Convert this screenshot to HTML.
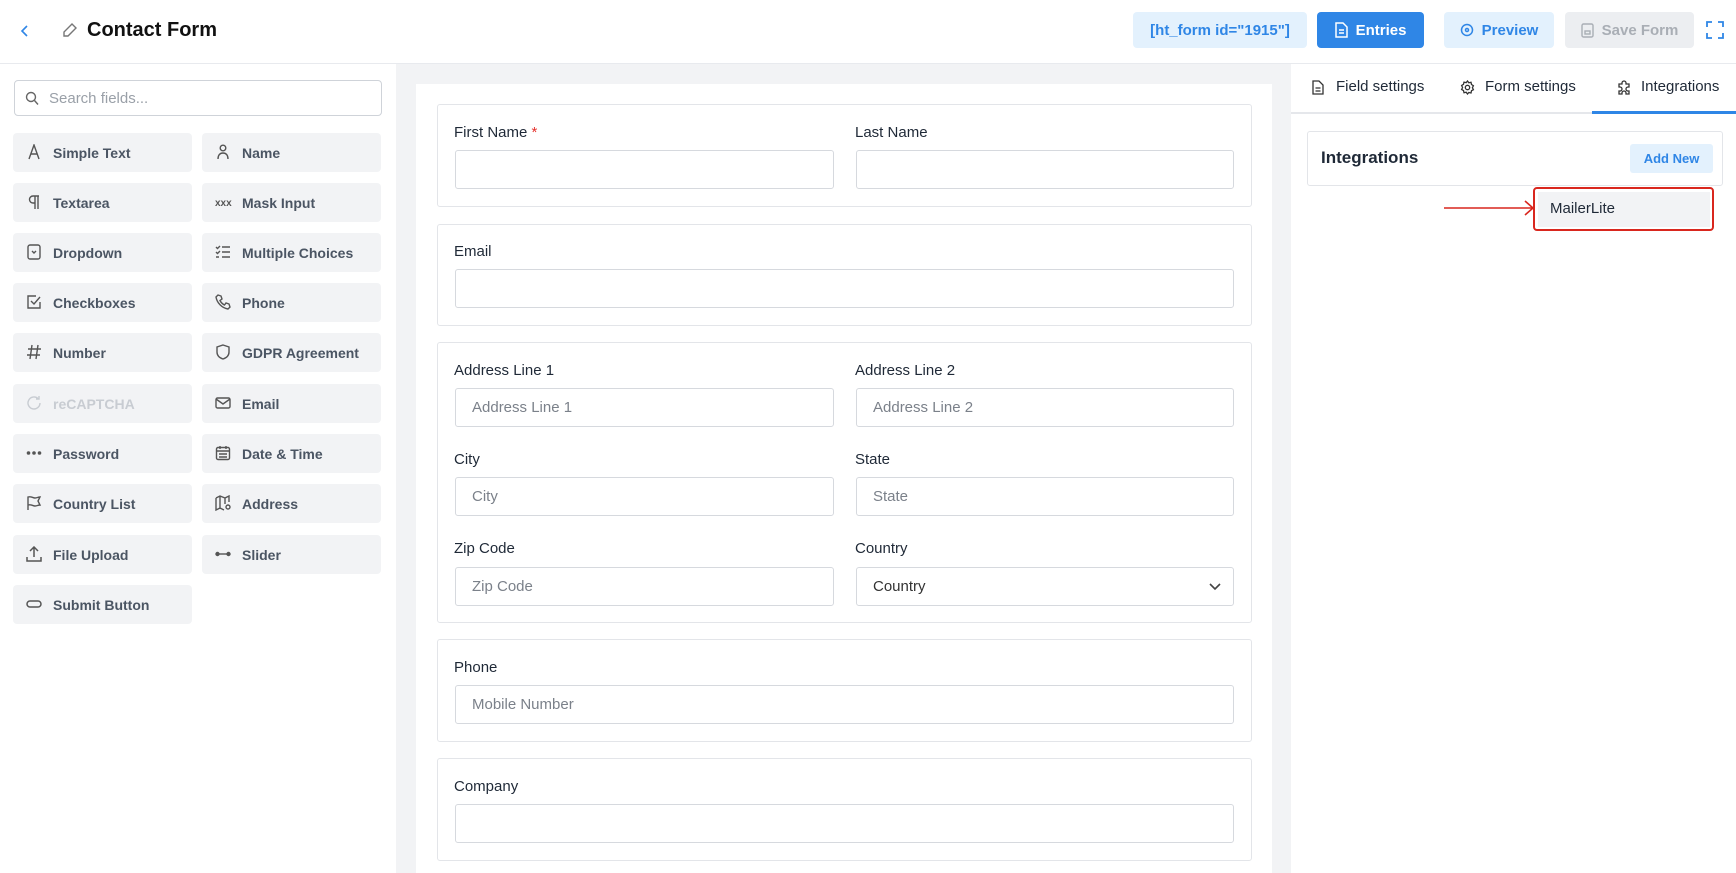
<!DOCTYPE html>
<html><head><meta charset="utf-8"><style>
*{box-sizing:border-box;margin:0;padding:0}
body{width:1736px;height:873px;overflow:hidden;background:#fff;font-family:"Liberation Sans",sans-serif;color:#1f2937;position:relative}
.abs{position:absolute}
.hdr{left:0;top:0;width:1736px;height:64px;border-bottom:1px solid #e8eaee;background:#fff}
.btn{position:absolute;top:12px;height:36px;border-radius:4px;font-size:15px;font-weight:bold;display:flex;align-items:center;justify-content:center;gap:8px}
.left{left:0;top:64px;width:396px;height:809px;background:#fff}
.fb{position:absolute;width:179px;height:39px;background:#f2f3f5;border-radius:4px;font-size:14px;font-weight:bold;color:#4b5563;display:flex;align-items:center}
.fb svg{position:absolute;left:13px;top:11px}
.fb span{position:absolute;left:40px}
.center{left:396px;top:64px;width:895px;height:809px;background:#f2f3f5}
.card{left:416px;top:84px;width:856px;height:789px;background:#fff}
.sec{position:absolute;left:437px;width:815px;border:1px solid #e3e5e9;border-radius:3px;background:#fff}
.lbl{position:absolute;font-size:15px;color:#1f2937}
.inp{position:absolute;height:39px;border:1px solid #d6d9de;border-radius:3px;background:#fff;font-size:15px;color:#7b818a;padding-left:16px;display:flex;align-items:center}
.right{left:1291px;top:64px;width:445px;height:809px;background:#fff}
.tab{position:absolute;top:78px;font-size:15px;color:#1f2937}
</style></head><body>
<div class="abs hdr">
 <svg class="abs" style="left:19px;top:24px" width="12" height="14" viewBox="0 0 12 14"><path d="M8 2 L3 7 L8 12" fill="none" stroke="#2f86e6" stroke-width="1.6"/></svg>
 <svg class="abs" style="left:61px;top:21px" width="18" height="18" viewBox="0 0 18 18" fill="none" stroke="#777" stroke-width="1.4"><path d="M11 3 L15 7 L7 15 L3 15 L3 11 Z"/></svg>
 <div class="abs" style="left:87px;top:19px;font-size:20px;font-weight:bold;color:#111">Contact Form</div>
 <div class="btn" style="left:1133px;width:174px;background:#e3f1fd;color:#2f86e6;font-weight:bold">[ht_form id="1915"]</div>
 <div class="btn" style="left:1317px;width:107px;background:#2f86e6;color:#fff"><svg width="13" height="16" viewBox="0 0 13 16" fill="none" stroke="#fff" stroke-width="1.5"><path d="M1 1h7l4 4v10H1z M4 8h5 M4 11h5"/></svg>Entries</div>
 <div class="btn" style="left:1444px;width:110px;background:#e3f1fd;color:#2f86e6"><svg width="14" height="14" viewBox="0 0 14 14" fill="none" stroke="#2f86e6" stroke-width="1.5"><circle cx="7" cy="7" r="5.5"/><circle cx="7" cy="7" r="1.5"/></svg>Preview</div>
 <div class="btn" style="left:1565px;width:129px;background:#eceef1;color:#a9aeb5"><svg width="13" height="15" viewBox="0 0 13 15" fill="none" stroke="#a9aeb5" stroke-width="1.4"><rect x="1" y="1" width="11" height="13" rx="1.5"/><rect x="4" y="8" width="5" height="3"/></svg>Save Form</div>
 <svg class="abs" style="left:1706px;top:21px" width="18" height="18" viewBox="0 0 18 18" fill="none" stroke="#2f86e6" stroke-width="1.8"><path d="M1 6V1h5 M12 1h5v5 M17 12v5h-5 M6 17H1v-5"/></svg>
</div>
<div class="abs left">
 <div class="abs" style="left:14px;top:16px;width:368px;height:36px;border:1px solid #cfd3d9;border-radius:4px"></div>
 <svg class="abs" style="left:25px;top:27px" width="14" height="15" viewBox="0 0 14 15" fill="none" stroke="#666" stroke-width="1.4"><circle cx="6" cy="6" r="4.5"/><path d="M9.5 9.5 L13 13.5"/></svg>
 <div class="abs" style="left:49px;top:26px;font-size:15px;color:#9aa0a8">Search fields...</div>
</div>
<div class="fb" style="left:13px;top:133px"><svg width="16" height="16" viewBox="0 0 16 16" fill="none" stroke="#555" stroke-width="1.4"><path d="M3 15 L8 1 L13 15 M5 10h6"/></svg><span>Simple Text</span></div>
<div class="fb" style="left:202px;top:133px"><svg width="16" height="16" viewBox="0 0 16 16" fill="none" stroke="#555" stroke-width="1.4"><circle cx="8" cy="4" r="2.8"/><path d="M3 15c0-4 2-6 5-6s5 2 5 6"/></svg><span>Name</span></div>
<div class="fb" style="left:13px;top:183px"><svg width="16" height="16" viewBox="0 0 16 16" fill="none" stroke="#555" stroke-width="1.4"><path d="M9 2v13 M12 2v13 M13 2H7a3.5 3.5 0 0 0 0 7h2"/></svg><span>Textarea</span></div>
<div class="fb" style="left:202px;top:183px"><svg width="18" height="16" viewBox="0 0 18 16"><text x="0" y="12" font-size="10" fill="#555" font-family="Liberation Sans">xxx</text></svg><span>Mask Input</span></div>
<div class="fb" style="left:13px;top:233px"><svg width="16" height="16" viewBox="0 0 16 16" fill="none" stroke="#555" stroke-width="1.4"><rect x="2" y="1" width="12" height="14" rx="2"/><path d="M6 7l2 2 2-2"/></svg><span>Dropdown</span></div>
<div class="fb" style="left:202px;top:233px"><svg width="16" height="16" viewBox="0 0 16 16" fill="none" stroke="#555" stroke-width="1.4"><path d="M7 3h8 M7 8h8 M7 13h8 M1 3l1.5 1.5L5 2 M1 8l1.5 1.5L5 7 M1 13h3"/></svg><span>Multiple Choices</span></div>
<div class="fb" style="left:13px;top:283px"><svg width="16" height="16" viewBox="0 0 16 16" fill="none" stroke="#555" stroke-width="1.4"><path d="M14 8v6H2V2h8 M5 7l3 3 6-7"/></svg><span>Checkboxes</span></div>
<div class="fb" style="left:202px;top:283px"><svg width="16" height="16" viewBox="0 0 16 16" fill="none" stroke="#555" stroke-width="1.4"><path d="M3 1l3 1 1 3-2 1.5c1 2 2.5 3.5 4.5 4.5L11 9l3 1 1 3-2 2C7 14 2 9 1 3z"/></svg><span>Phone</span></div>
<div class="fb" style="left:13px;top:333px"><svg width="16" height="16" viewBox="0 0 16 16" fill="none" stroke="#555" stroke-width="1.4"><path d="M6 1L4 15 M12 1l-2 14 M2 5h13 M1 11h13"/></svg><span>Number</span></div>
<div class="fb" style="left:202px;top:333px"><svg width="16" height="16" viewBox="0 0 16 16" fill="none" stroke="#555" stroke-width="1.4"><path d="M8 1l6 2v5c0 4-3 6-6 7-3-1-6-3-6-7V3z"/></svg><span>GDPR Agreement</span></div>
<div class="fb" style="left:13px;top:384px;color:#c8ccd2"><svg width="16" height="16" viewBox="0 0 16 16" fill="none" stroke="#c8ccd2" stroke-width="1.4"><path d="M14 8a6 6 0 1 1-2-4.5 M13 1v3h-3"/></svg><span>reCAPTCHA</span></div>
<div class="fb" style="left:202px;top:384px"><svg width="16" height="16" viewBox="0 0 16 16" fill="none" stroke="#555" stroke-width="1.4"><rect x="1" y="3" width="14" height="10" rx="1.5"/><path d="M1 4l7 5 7-5"/></svg><span>Email</span></div>
<div class="fb" style="left:13px;top:434px"><svg width="16" height="16" viewBox="0 0 16 16" fill="#555"><circle cx="2.5" cy="8" r="1.8"/><circle cx="8" cy="8" r="1.8"/><circle cx="13.5" cy="8" r="1.8"/></svg><span>Password</span></div>
<div class="fb" style="left:202px;top:434px"><svg width="16" height="16" viewBox="0 0 16 16" fill="none" stroke="#555" stroke-width="1.4"><rect x="1.5" y="2.5" width="13" height="12" rx="1.5"/><path d="M1.5 6h13 M5 1v3 M11 1v3 M4 9h8 M4 12h8"/></svg><span>Date &amp; Time</span></div>
<div class="fb" style="left:13px;top:484px"><svg width="16" height="16" viewBox="0 0 16 16" fill="none" stroke="#555" stroke-width="1.4"><path d="M2 15V2c3-1 5 1 7 1s3-1 5-1l-2 4 2 4c-2 0-3 1-5 1s-4-2-7-1"/></svg><span>Country List</span></div>
<div class="fb" style="left:202px;top:484px"><svg width="17" height="16" viewBox="0 0 17 16" fill="none" stroke="#555" stroke-width="1.4"><path d="M1 3l4-2 5 2 4-2v6 M1 3v12l4-2 4 2 M5 1v12 M10 3v6"/><circle cx="13" cy="12" r="2"/></svg><span>Address</span></div>
<div class="fb" style="left:13px;top:535px"><svg width="16" height="16" viewBox="0 0 16 16" fill="none" stroke="#555" stroke-width="1.5"><path d="M8 11V2 M4 5l4-4 4 4 M1 11v4h14v-4"/></svg><span>File Upload</span></div>
<div class="fb" style="left:202px;top:535px"><svg width="16" height="16" viewBox="0 0 16 16" fill="none" stroke="#555" stroke-width="1.4"><path d="M3 8h10"/><circle cx="2.5" cy="8" r="1.5" fill="#555"/><circle cx="13.5" cy="8" r="1.5" fill="#555"/></svg><span>Slider</span></div>
<div class="fb" style="left:13px;top:585px"><svg width="16" height="16" viewBox="0 0 16 16" fill="none" stroke="#555" stroke-width="1.5"><rect x="1" y="5" width="14" height="6" rx="3"/></svg><span>Submit Button</span></div>

<div class="abs center"></div>
<div class="abs card"></div>
<div class="sec" style="top:104px;height:103px"></div>
<div class="lbl" style="left:454px;top:124px">First Name <span style="color:#e5322d">*</span></div>
<div class="lbl" style="left:855px;top:124px">Last Name</div>
<div class="inp" style="left:455px;top:150px;width:379px"></div>
<div class="inp" style="left:856px;top:150px;width:378px"></div>
<div class="sec" style="top:224px;height:102px"></div>
<div class="lbl" style="left:454px;top:243px">Email</div>
<div class="inp" style="left:455px;top:269px;width:779px"></div>
<div class="sec" style="top:342px;height:281px"></div>
<div class="lbl" style="left:454px;top:362px">Address Line 1</div>
<div class="lbl" style="left:855px;top:362px">Address Line 2</div>
<div class="inp" style="left:455px;top:388px;width:379px">Address Line 1</div>
<div class="inp" style="left:856px;top:388px;width:378px">Address Line 2</div>
<div class="lbl" style="left:454px;top:451px">City</div>
<div class="lbl" style="left:855px;top:451px">State</div>
<div class="inp" style="left:455px;top:477px;width:379px">City</div>
<div class="inp" style="left:856px;top:477px;width:378px">State</div>
<div class="lbl" style="left:454px;top:540px">Zip Code</div>
<div class="lbl" style="left:855px;top:540px">Country</div>
<div class="inp" style="left:455px;top:567px;width:379px">Zip Code</div>
<div class="inp" style="left:856px;top:567px;width:378px;color:#333">Country<svg style="position:absolute;right:12px;top:15px" width="12" height="8" viewBox="0 0 12 8" fill="none" stroke="#444" stroke-width="1.6"><path d="M1 1l5 5 5-5"/></svg></div>
<div class="sec" style="top:639px;height:103px"></div>
<div class="lbl" style="left:454px;top:659px">Phone</div>
<div class="inp" style="left:455px;top:685px;width:779px">Mobile Number</div>
<div class="sec" style="top:758px;height:103px"></div>
<div class="lbl" style="left:454px;top:778px">Company</div>
<div class="inp" style="left:455px;top:804px;width:779px"></div>

<div class="abs right"></div>
<div class="abs" style="left:1291px;top:112px;width:445px;height:2px;background:#e5e7eb"></div>
<div class="abs" style="left:1592px;top:111px;width:144px;height:3px;background:#2f86e6"></div>
<svg class="abs" style="left:1312px;top:80px" width="12" height="15" viewBox="0 0 12 15" fill="none" stroke="#333" stroke-width="1.3"><path d="M1 1h6l4 4v9H1z M3.5 8h5 M3.5 11h5"/></svg>
<div class="tab" style="left:1336px">Field settings</div>
<svg class="abs" style="left:1460px;top:80px" width="15" height="15" viewBox="0 0 15 15" fill="none" stroke="#333" stroke-width="1.3"><circle cx="7.5" cy="7.5" r="2.2"/><path d="M7.5 1l1.3 1.8 2.2-.5.5 2.2 1.9 1.2-1 2 1 2-1.9 1-.5 2.3-2.2-.5L7.5 14l-1.3-1.8-2.2.5-.5-2.2L1.6 9.5l1-2-1-2 1.9-1.2.5-2.2 2.2.5z"/></svg>
<div class="tab" style="left:1485px">Form settings</div>
<svg class="abs" style="left:1616px;top:80px" width="16" height="16" viewBox="0 0 16 16" fill="none" stroke="#333" stroke-width="1.3"><path d="M6 3a2 2 0 0 1 4 0v1h3v3h-1a2 2 0 0 0 0 4h1v3h-3v-1a2 2 0 0 0-4 0v1H3v-3h1a2 2 0 0 0 0-4H3V4h3z"/></svg>
<div class="tab" style="left:1641px">Integrations</div>
<div class="abs" style="left:1307px;top:131px;width:416px;height:55px;border:1px solid #e3e5e9;border-radius:3px;background:#fff"></div>
<div class="abs" style="left:1321px;top:148px;font-size:17px;font-weight:bold;color:#1f2937">Integrations</div>
<div class="abs" style="left:1630px;top:144px;width:83px;height:29px;background:#e3f1fd;border-radius:3px;color:#2f86e6;font-size:13px;font-weight:bold;display:flex;align-items:center;justify-content:center">Add New</div>
<div class="abs" style="left:1533px;top:187px;width:181px;height:44px;border:2px solid #d9271e;border-radius:4px;background:#fff"></div>
<div class="abs" style="left:1538px;top:192px;width:172px;height:35px;background:#f2f3f5"></div>
<div class="abs" style="left:1550px;top:200px;font-size:15px;color:#1f2937">MailerLite</div>
<svg class="abs" style="left:1442px;top:199px" width="94" height="18" viewBox="0 0 94 18" fill="none" stroke="#d9271e" stroke-width="1.6"><path d="M2 9h88 M83 2l8 7-8 7"/></svg>
</body></html>
